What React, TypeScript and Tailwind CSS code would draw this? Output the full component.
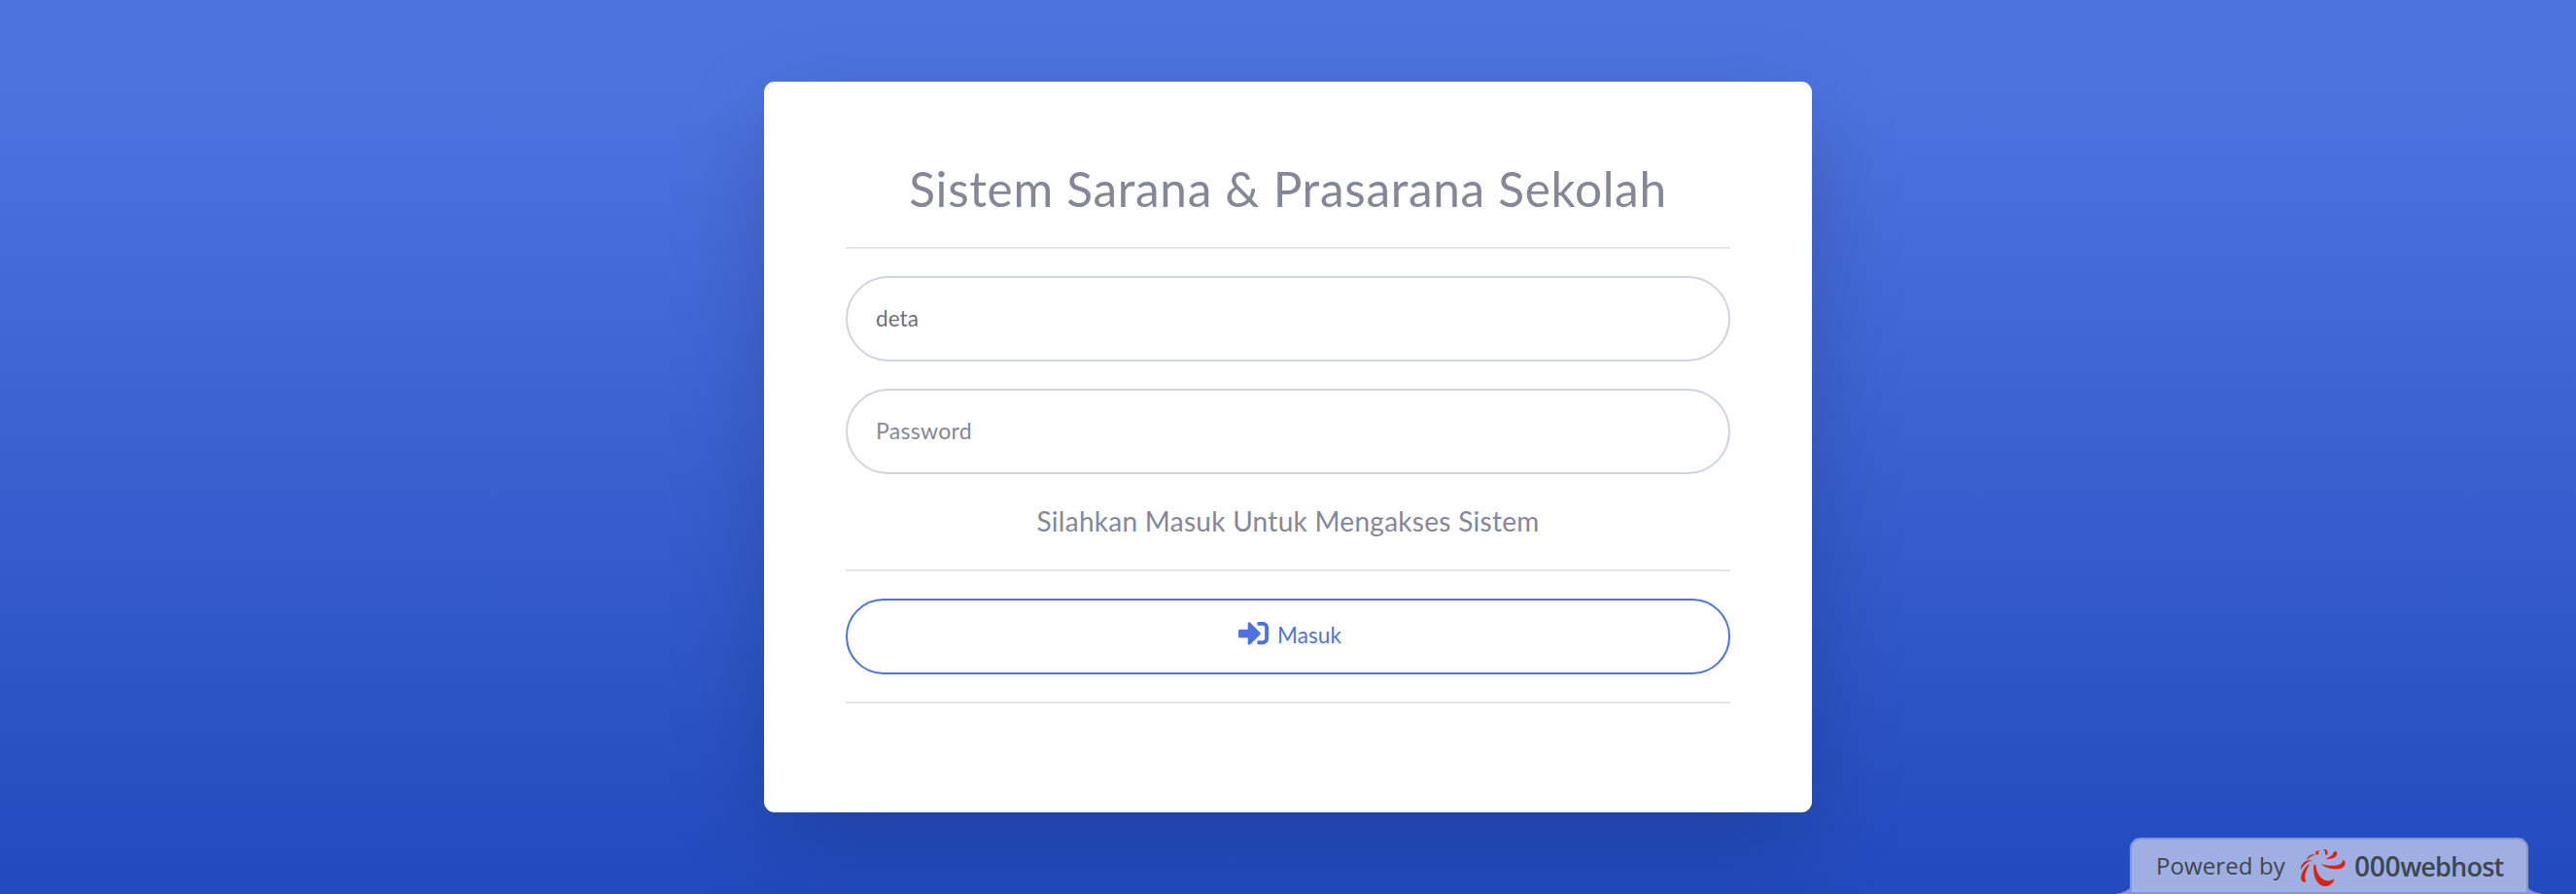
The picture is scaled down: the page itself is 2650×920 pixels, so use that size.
import { FaSignInAlt } from "react-icons/fa";

function Divider() {
  return <hr className="h-0.5 border-0 bg-[#e5e5e6]" />;
}

function HostLogo() {
  return (
    <svg viewBox="0 0 180 138" className="h-[46px] w-[60px] shrink-0" fill="#d9230f">
      <path d="M61 65C57 95 68 132 98 132C112 132 122 121 124 109C112 117 99 117 90 111C76 102 68 85 67 66Z" />
      <path d="M83 62C98 80 140 84 152 73C161 64 158 51 150 51C150 62 140 67 125 68C108 69 95 67 83 62Z" />
      <path d="M98 47C115 51 134 42 133 30C132 23 123 23 121 28C121 36 111 42 98 47Z" />
      <path d="M90 18C99 16 106 23 103 32C101 36 97 36 95 33C98 28 95 22 90 18Z" />
      <path d="M70 35C62 31 66 21 80 22C74 25 73 29 76 33Z" />
      <path d="M40 51C40 41 53 31 65 35C54 37 48 42 40 51Z" />
      <path d="M21 80C19 62 38 49 57 51C41 56 32 64 21 80Z" />
      <path d="M49 62C29 73 19 98 22 112C24 119 33 121 37 118C30 104 35 84 49 62Z" />
    </svg>
  );
}

function HostBadge() {
  return (
    <a
      href="#"
      className="absolute right-[49px] bottom-0 flex h-[58px] w-[410px] items-center rounded-t-[11px] border-2 border-[#8496d2] bg-[#9fafe2] font-['Open_Sans',sans-serif] text-[#40454f]"
    >
      <svg viewBox="0 0 17 10" className="absolute -bottom-0.5 -left-[17px] h-[10px] w-[17px]">
        <path d="M17 0C16 5 10 8.500 0 10H17Z" fill="#8496d2" />
      </svg>
      <svg viewBox="0 0 17 10" className="absolute -right-[17px] -bottom-0.5 h-[10px] w-[17px]">
        <path d="M0 0C1 5 7 8.500 17 10H0Z" fill="#8496d2" />
      </svg>
      <span className="ml-[25px] w-[142px] text-2xl leading-8 tracking-[0.1px] whitespace-nowrap">Powered by</span>
      <HostLogo />
      <span className="ml-0.5 flex items-baseline text-[27px] leading-8 font-semibold whitespace-nowrap">
        <span className="text-[28px] tracking-[-0.3px]">000</span>
        <span className="tracking-[-0.8px]">webhost</span>
      </span>
    </a>
  );
}

export default function App() {
  return (
    <main className="relative h-[920px] w-full overflow-hidden bg-[linear-gradient(180deg,#4e73df_10%,#224abe_100%)] pt-[84px] font-[Lato,sans-serif]">
      <section className="mx-auto h-[752px] w-[1078px] rounded-[11px] bg-white px-[84px] pt-[81px] shadow-[0_32px_96px_rgba(0,0,0,0.175)]">
        <h1 className="mb-[31px] text-center text-[49.5px] leading-[58px] tracking-[0.7px] text-[#858796]">
          Sistem Sarana &amp; Prasarana Sekolah
        </h1>
        <Divider />
        <form className="mt-7 flex flex-col" onSubmit={(e) => e.preventDefault()}>
          <input
            type="text"
            defaultValue="deta"
            className="h-[88px] rounded-full border-2 border-[#d1d3e2] px-[29px] pb-0.5 text-[22.5px] tracking-[0.1px] text-[#6e707e] outline-none"
          />
          <input
            type="password"
            placeholder="Password"
            className="mt-7 h-[88px] rounded-full border-2 border-[#d1d3e2] px-[29px] pb-0.5 text-[23px] tracking-[0.3px] text-[#6e707e] outline-none placeholder:text-[#858796]"
          />
          <p className="mt-[31px] mb-[33px] text-center text-[28px] leading-[34px] tracking-[0.28px] text-[#858796]">
            Silahkan Masuk Untuk Mengakses Sistem
          </p>
          <Divider />
          <button
            type="submit"
            className="my-7 flex h-[78px] items-center justify-center rounded-full border-2 border-[#4e73df] pl-1 text-[22.5px] tracking-[0.1px] text-[#4e73df]"
          >
            <FaSignInAlt className="mr-[9px] mb-2 size-[31px]" />
            <span className="mb-0.5">Masuk</span>
          </button>
          <Divider />
        </form>
      </section>
      <HostBadge />
    </main>
  );
}
